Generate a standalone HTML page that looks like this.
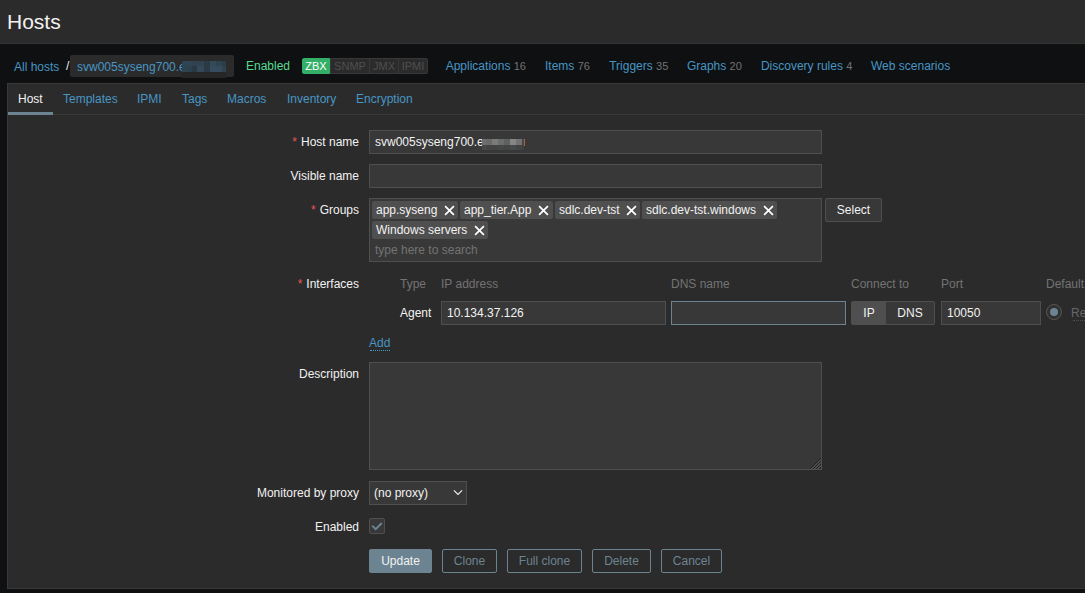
<!DOCTYPE html>
<html><head><meta charset="utf-8">
<style>
*{box-sizing:border-box;margin:0;padding:0}
html,body{width:1085px;height:593px;overflow:hidden;background:#0e1012;font-family:"Liberation Sans",sans-serif;font-size:12px;color:#f2f2f2}
.a{position:absolute;white-space:nowrap;line-height:14px}
.hdr{position:absolute;left:0;top:0;width:1085px;height:44px;background:#2b2b2b;border-bottom:1px solid #333}
.ttl{position:absolute;left:7px;top:10px;font-size:21px;line-height:24px;color:#f2f2f2}
.lnk{color:#4796c4}
.sup{color:#737373;font-size:11px}
.crumb{position:absolute;left:70px;top:55px;width:164px;height:22px;background:#2b2b2b;border-radius:2px}
.st{position:absolute;top:58px;height:16px;font-size:11px;line-height:14px;text-align:center;border:1px solid #383838;background:#2b2b2b;color:#4f4f4f}
.box{position:absolute;left:7px;top:83px;width:1100px;height:506px;background:#2b2b2b;border:1px solid #383838}
.tabline{position:absolute;left:8px;top:114px;width:1100px;height:1px;background:#383838}
.tabsel{position:absolute;left:8px;top:112px;width:45px;height:3px;background:#6c8491}
.lbl{position:absolute;right:726px;white-space:nowrap;line-height:14px;text-align:right}
.req{color:#e45959;margin-right:4px}
.inp{position:absolute;height:24px;background:#383838;border:1px solid #4f4f4f}
.itxt{position:absolute;left:5px;top:4px;line-height:14px;white-space:nowrap}
.tag{position:absolute;height:18px;background:#4f4f4f;border-radius:2px}
.tag span{position:absolute;left:4px;top:2px;line-height:14px;white-space:nowrap}
.x{position:absolute;top:5px;width:9px;height:9px}
.th{position:absolute;top:277px;color:#737373;line-height:14px;white-space:nowrap}
.btn{position:absolute;top:549px;height:24px;border:1px solid #6c8491;color:#6c8491;border-radius:2px;text-align:center;line-height:22px}
</style></head><body>
<div class="hdr"></div>
<div class="ttl">Hosts</div>

<!-- nav -->
<div class="a lnk" style="left:14px;top:60px">All hosts</div>
<div class="a" style="left:66px;top:59px">/</div>
<div class="crumb"></div>
<div class="a lnk" style="left:77px;top:60px">svw005syseng700.e</div>
<div style="position:absolute;left:182px;top:61px;width:5px;height:5px;background:#2f4352"></div><div style="position:absolute;left:187px;top:61px;width:5px;height:5px;background:#304452"></div><div style="position:absolute;left:192px;top:61px;width:5px;height:5px;background:#2f4250"></div><div style="position:absolute;left:197px;top:61px;width:7px;height:5px;background:#2f4352"></div><div style="position:absolute;left:204px;top:61px;width:6px;height:5px;background:#2c3a44"></div><div style="position:absolute;left:210px;top:61px;width:6px;height:5px;background:#33495a"></div><div style="position:absolute;left:216px;top:61px;width:6px;height:5px;background:#2f4250"></div><div style="position:absolute;left:222px;top:61px;width:4px;height:5px;background:#2d3d48"></div><div style="position:absolute;left:182px;top:66px;width:5px;height:6px;background:#2e4352"></div><div style="position:absolute;left:187px;top:66px;width:5px;height:6px;background:#2d404d"></div><div style="position:absolute;left:192px;top:66px;width:5px;height:6px;background:#2a3840"></div><div style="position:absolute;left:197px;top:66px;width:7px;height:6px;background:#33495a"></div><div style="position:absolute;left:204px;top:66px;width:6px;height:6px;background:#2c3a45"></div><div style="position:absolute;left:210px;top:66px;width:6px;height:6px;background:#354c5e"></div><div style="position:absolute;left:216px;top:66px;width:6px;height:6px;background:#354c5e"></div><div style="position:absolute;left:222px;top:66px;width:4px;height:6px;background:#2f4250"></div><div style="position:absolute;left:182px;top:72px;width:44px;height:6px;background:#262626"></div>
<div class="a" style="left:246px;top:59px;color:#59db8f">Enabled</div>
<div class="st" style="left:302px;width:28px;border-radius:2px 0 0 2px;background:#34af67;border-color:#34af67;color:#fff">ZBX</div>
<div class="st" style="left:330px;width:40px">SNMP</div>
<div class="st" style="left:369px;width:30px">JMX</div>
<div class="st" style="left:398px;width:30px;border-radius:0 2px 2px 0">IPMI</div>
<div class="a" style="left:445.7px;top:59px"><span class="lnk">Applications</span> <span class="sup">16</span></div>
<div class="a" style="left:545px;top:59px"><span class="lnk">Items</span> <span class="sup">76</span></div>
<div class="a" style="left:609.2px;top:59px"><span class="lnk">Triggers</span> <span class="sup">35</span></div>
<div class="a" style="left:686.9px;top:59px"><span class="lnk">Graphs</span> <span class="sup">20</span></div>
<div class="a" style="left:760.9px;top:59px"><span class="lnk">Discovery rules</span> <span class="sup">4</span></div>
<div class="a" style="left:871px;top:59px"><span class="lnk">Web scenarios</span></div>

<div class="box"></div>
<div class="tabline"></div>
<div class="tabsel"></div>
<div class="a" style="left:18px;top:92px">Host</div>
<div class="a lnk" style="left:63px;top:92px">Templates</div>
<div class="a lnk" style="left:137px;top:92px">IPMI</div>
<div class="a lnk" style="left:182px;top:92px">Tags</div>
<div class="a lnk" style="left:227px;top:92px">Macros</div>
<div class="a lnk" style="left:287px;top:92px">Inventory</div>
<div class="a lnk" style="left:356px;top:92px">Encryption</div>

<!-- form -->
<div class="lbl" style="top:135px"><span class="req">*</span>Host name</div>
<div class="inp" style="left:369px;top:130px;width:453px"><div class="itxt">svw005syseng700.e</div></div>
<div style="position:absolute;left:482px;top:139px;width:4px;height:6px;background:#6f6f6f"></div><div style="position:absolute;left:486px;top:139px;width:6px;height:6px;background:#6a6a6a"></div><div style="position:absolute;left:492px;top:139px;width:6px;height:6px;background:#7b7b7a"></div><div style="position:absolute;left:498px;top:139px;width:6px;height:6px;background:#6b6d6d"></div><div style="position:absolute;left:504px;top:139px;width:6px;height:6px;background:#5f6161"></div><div style="position:absolute;left:510px;top:139px;width:6px;height:6px;background:#868686"></div><div style="position:absolute;left:516px;top:139px;width:6px;height:6px;background:#727272"></div><div style="position:absolute;left:522px;top:139px;width:2px;height:6px;background:#474747"></div><div style="position:absolute;left:482px;top:145px;width:4px;height:5px;background:#474747"></div><div style="position:absolute;left:486px;top:145px;width:6px;height:5px;background:#444444"></div><div style="position:absolute;left:492px;top:145px;width:6px;height:5px;background:#434343"></div><div style="position:absolute;left:498px;top:145px;width:6px;height:5px;background:#454747"></div><div style="position:absolute;left:504px;top:145px;width:6px;height:5px;background:#434545"></div><div style="position:absolute;left:510px;top:145px;width:6px;height:5px;background:#46484a"></div><div style="position:absolute;left:516px;top:145px;width:6px;height:5px;background:#444444"></div><div style="position:absolute;left:522px;top:145px;width:2px;height:5px;background:#404040"></div><div style="position:absolute;left:524px;top:139px;width:1px;height:7px;background:#a8643c"></div>
<div class="lbl" style="top:169px">Visible name</div>
<div class="inp" style="left:369px;top:164px;width:453px"></div>

<div class="lbl" style="top:203px"><span class="req">*</span>Groups</div>
<div class="inp" style="left:369px;top:198px;width:453px;height:64px"></div>
<div class="tag" style="left:372px;top:201px;width:86px"><span>app.syseng</span></div>
<div class="tag" style="left:460px;top:201px;width:93px"><span>app_tier.App</span></div>
<div class="tag" style="left:555px;top:201px;width:85px"><span>sdlc.dev-tst</span></div>
<div class="tag" style="left:642px;top:201px;width:135px"><span>sdlc.dev-tst.windows</span></div>
<div class="tag" style="left:372px;top:221px;width:116px"><span>Windows servers</span></div>
<svg style="position:absolute;left:444px;top:205px" width="11" height="11" viewBox="0 0 11 11"><path d="M1.1 1.1L9.9 9.9M9.9 1.1L1.1 9.9" stroke="#fff" stroke-width="1.75"/></svg><svg style="position:absolute;left:538px;top:205px" width="11" height="11" viewBox="0 0 11 11"><path d="M1.1 1.1L9.9 9.9M9.9 1.1L1.1 9.9" stroke="#fff" stroke-width="1.75"/></svg><svg style="position:absolute;left:626px;top:205px" width="11" height="11" viewBox="0 0 11 11"><path d="M1.1 1.1L9.9 9.9M9.9 1.1L1.1 9.9" stroke="#fff" stroke-width="1.75"/></svg><svg style="position:absolute;left:763px;top:205px" width="11" height="11" viewBox="0 0 11 11"><path d="M1.1 1.1L9.9 9.9M9.9 1.1L1.1 9.9" stroke="#fff" stroke-width="1.75"/></svg><svg style="position:absolute;left:474px;top:225px" width="11" height="11" viewBox="0 0 11 11"><path d="M1.1 1.1L9.9 9.9M9.9 1.1L1.1 9.9" stroke="#fff" stroke-width="1.75"/></svg>
<div class="a" style="left:375px;top:243px;color:#737373">type here to search</div>
<div class="inp" style="left:825px;top:198px;width:57px;border-radius:2px;text-align:center;line-height:22px">Select</div>

<div class="lbl" style="top:277px"><span class="req">*</span>Interfaces</div>
<div class="th" style="left:400px">Type</div>
<div class="th" style="left:441px">IP address</div>
<div class="th" style="left:671px">DNS name</div>
<div class="th" style="left:851px">Connect to</div>
<div class="th" style="left:941px">Port</div>
<div class="th" style="left:1046px">Default</div>
<div class="a" style="left:400px;top:306px">Agent</div>
<div class="inp" style="left:441px;top:301px;width:225px"><div class="itxt">10.134.37.126</div></div>
<div class="inp" style="left:671px;top:301px;width:175px;border-color:#6c8491"></div>
<div class="inp" style="left:851px;top:301px;width:84px;border-radius:2px"></div>
<div style="position:absolute;left:852px;top:302px;width:34px;height:22px;background:#4f4f4f;text-align:center;line-height:22px">IP</div>
<div style="position:absolute;left:886px;top:302px;width:48px;height:22px;text-align:center;line-height:22px">DNS</div>
<div class="inp" style="left:941px;top:301px;width:100px"><div class="itxt">10050</div></div>
<div style="position:absolute;left:1046px;top:304px;width:16px;height:16px;border:1px solid #555;border-radius:50%;background:#313131"></div>
<div style="position:absolute;left:1050px;top:308px;width:8px;height:8px;border-radius:50%;background:#6c8491"></div>
<div class="a" style="left:1071px;top:306px;color:#666">Re</div><div style="position:absolute;left:1073px;top:320px;width:14px;height:1px;border-top:1px dotted #4f4f4f"></div>

<div class="a lnk" style="left:369px;top:336px">Add</div>
<div style="position:absolute;left:370px;top:350px;width:20px;height:1px;border-top:1px dotted #4796c4"></div>

<div class="lbl" style="top:367px">Description</div>
<div class="inp" style="left:369px;top:362px;width:453px;height:108px"></div><svg style="position:absolute;left:809px;top:457px" width="13" height="13" viewBox="0 0 13 13"><path d="M1 12L12 1M4 12L12 4M7 12L12 7M10 12L12 10" stroke="#202020" stroke-width="1"/><path d="M2.5 12L12 2.5M5.5 12L12 5.5M8.5 12L12 8.5" stroke="#666" stroke-width="1"/></svg>

<div class="lbl" style="top:486px">Monitored by proxy</div>
<div class="inp" style="left:369px;top:481px;width:98px"><div class="itxt" style="left:4px">(no proxy)</div></div><svg style="position:absolute;left:452px;top:488px" width="12" height="8" viewBox="0 0 12 8"><path d="M1.9 2.3L6 6.4L10.1 2.3" fill="none" stroke="#f2f2f2" stroke-width="1.15"/></svg>

<div class="lbl" style="top:520px">Enabled</div>
<div class="inp" style="left:369px;top:518px;width:16px;height:16px;border-radius:2px"></div><svg style="position:absolute;left:369px;top:518px" width="16" height="16" viewBox="0 0 16 16"><path d="M3.2 7.6L6.7 11.1L12.8 5.0" fill="none" stroke="#6c8491" stroke-width="2"/></svg>

<div class="btn" style="left:369px;width:63px;background:#6c8491;color:#f2f2f2">Update</div>
<div class="btn" style="left:442px;width:55px">Clone</div>
<div class="btn" style="left:507px;width:75px">Full clone</div>
<div class="btn" style="left:592px;width:59px">Delete</div>
<div class="btn" style="left:661px;width:61px">Cancel</div>
</body></html>
